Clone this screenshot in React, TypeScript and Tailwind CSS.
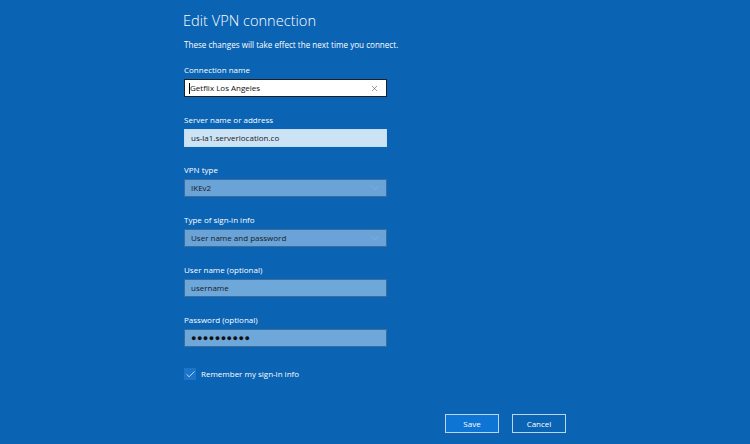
import { Check, ChevronDown, X } from 'lucide-react';

const font = { fontFamily: '"Open Sans", "Noto Sans", sans-serif' };

function Label({ children }: { children: React.ReactNode }) {
  return <div className="h-[12px] mb-[3px] text-[8px] leading-[12px] text-white">{children}</div>;
}

export default function App() {
  return (
    <div className="w-[750px] h-[444px] bg-[#0a63b3] overflow-hidden flex flex-col" style={font}>
      <div className="ml-[184px] w-[203px] flex flex-col">
        <h1 className="mt-[8px] ml-[-1px] h-[24px] text-[14.6px] leading-[24px] font-light text-white whitespace-nowrap">
          Edit VPN connection
        </h1>
        <p className="mt-[7px] h-[12px] text-[8.1px] leading-[12px] text-white whitespace-nowrap">
          These changes will take effect the next time you connect.
        </p>

        <div className="mt-[13px]">
          <Label>Connection name</Label>
          <div className="h-[18px] bg-white border border-[#1f1f1f] flex items-center pl-[4px] pr-[7px]">
            <span className="w-px h-[11px] bg-black" />
            <span className="flex-1 text-[8px] text-[#111] whitespace-nowrap">Getflix Los Angeles</span>
            <X className="w-[9px] h-[9px] text-[#555]" strokeWidth={1.6} />
          </div>
        </div>

        <div className="mt-[17px]">
          <Label>Server name or address</Label>
          <div className="h-[18px] bg-[#cce3f5] border border-[#c3dcf0] flex items-center pl-[6px]">
            <span className="text-[8px] text-[#1a1a1a] whitespace-nowrap">us-la1.serverlocation.co</span>
          </div>
        </div>

        <div className="mt-[17px]">
          <Label>VPN type</Label>
          <div className="h-[18px] bg-[#6aa3d7] border border-[#3a6c9c] flex items-center pl-[6px] pr-[5px]">
            <span className="flex-1 text-[8px] text-[#1a1a1a] whitespace-nowrap">IKEv2</span>
            <ChevronDown className="w-[12px] h-[12px] text-[#8ab4dc]" strokeWidth={1.4} />
          </div>
        </div>

        <div className="mt-[17px]">
          <Label>Type of sign-in info</Label>
          <div className="h-[18px] bg-[#6aa3d7] border border-[#3a6c9c] flex items-center pl-[6px] pr-[5px]">
            <span className="flex-1 text-[8px] text-[#1a1a1a] whitespace-nowrap">User name and password</span>
            <ChevronDown className="w-[12px] h-[12px] text-[#8ab4dc]" strokeWidth={1.4} />
          </div>
        </div>

        <div className="mt-[17px]">
          <Label>User name (optional)</Label>
          <div className="h-[18px] bg-[#6ea8db] border border-[#3a6c9c] flex items-center pl-[6px]">
            <span className="text-[8px] text-[#1a1a1a] whitespace-nowrap">username</span>
          </div>
        </div>

        <div className="mt-[17px]">
          <Label>Password (optional)</Label>
          <div className="h-[18px] bg-[#6ea8db] border border-[#3a6c9c] flex items-center pl-[6px]">
            <span className="text-[9px] tracking-[0.5px] text-[#111] whitespace-nowrap">●●●●●●●●●●</span>
          </div>
        </div>

        <div className="mt-[21px] flex items-center gap-[5px]">
          <div className="w-[12px] h-[12px] bg-[#1a74c9] flex items-center justify-center">
            <Check className="w-[11px] h-[11px] text-white" strokeWidth={1.6} />
          </div>
          <span className="text-[8px] leading-[12px] text-white whitespace-nowrap">Remember my sign-in info</span>
        </div>
      </div>

      <div className="mt-[34px] flex justify-end gap-[13px] pr-[184px]">
        <button className="w-[54px] h-[19px] bg-[#0f75d4] border border-[#b9d6f0] text-white text-[8px]">Save</button>
        <button className="w-[54px] h-[19px] bg-transparent border border-[#b9d6f0] text-white text-[8px]">Cancel</button>
      </div>
    </div>
  );
}
